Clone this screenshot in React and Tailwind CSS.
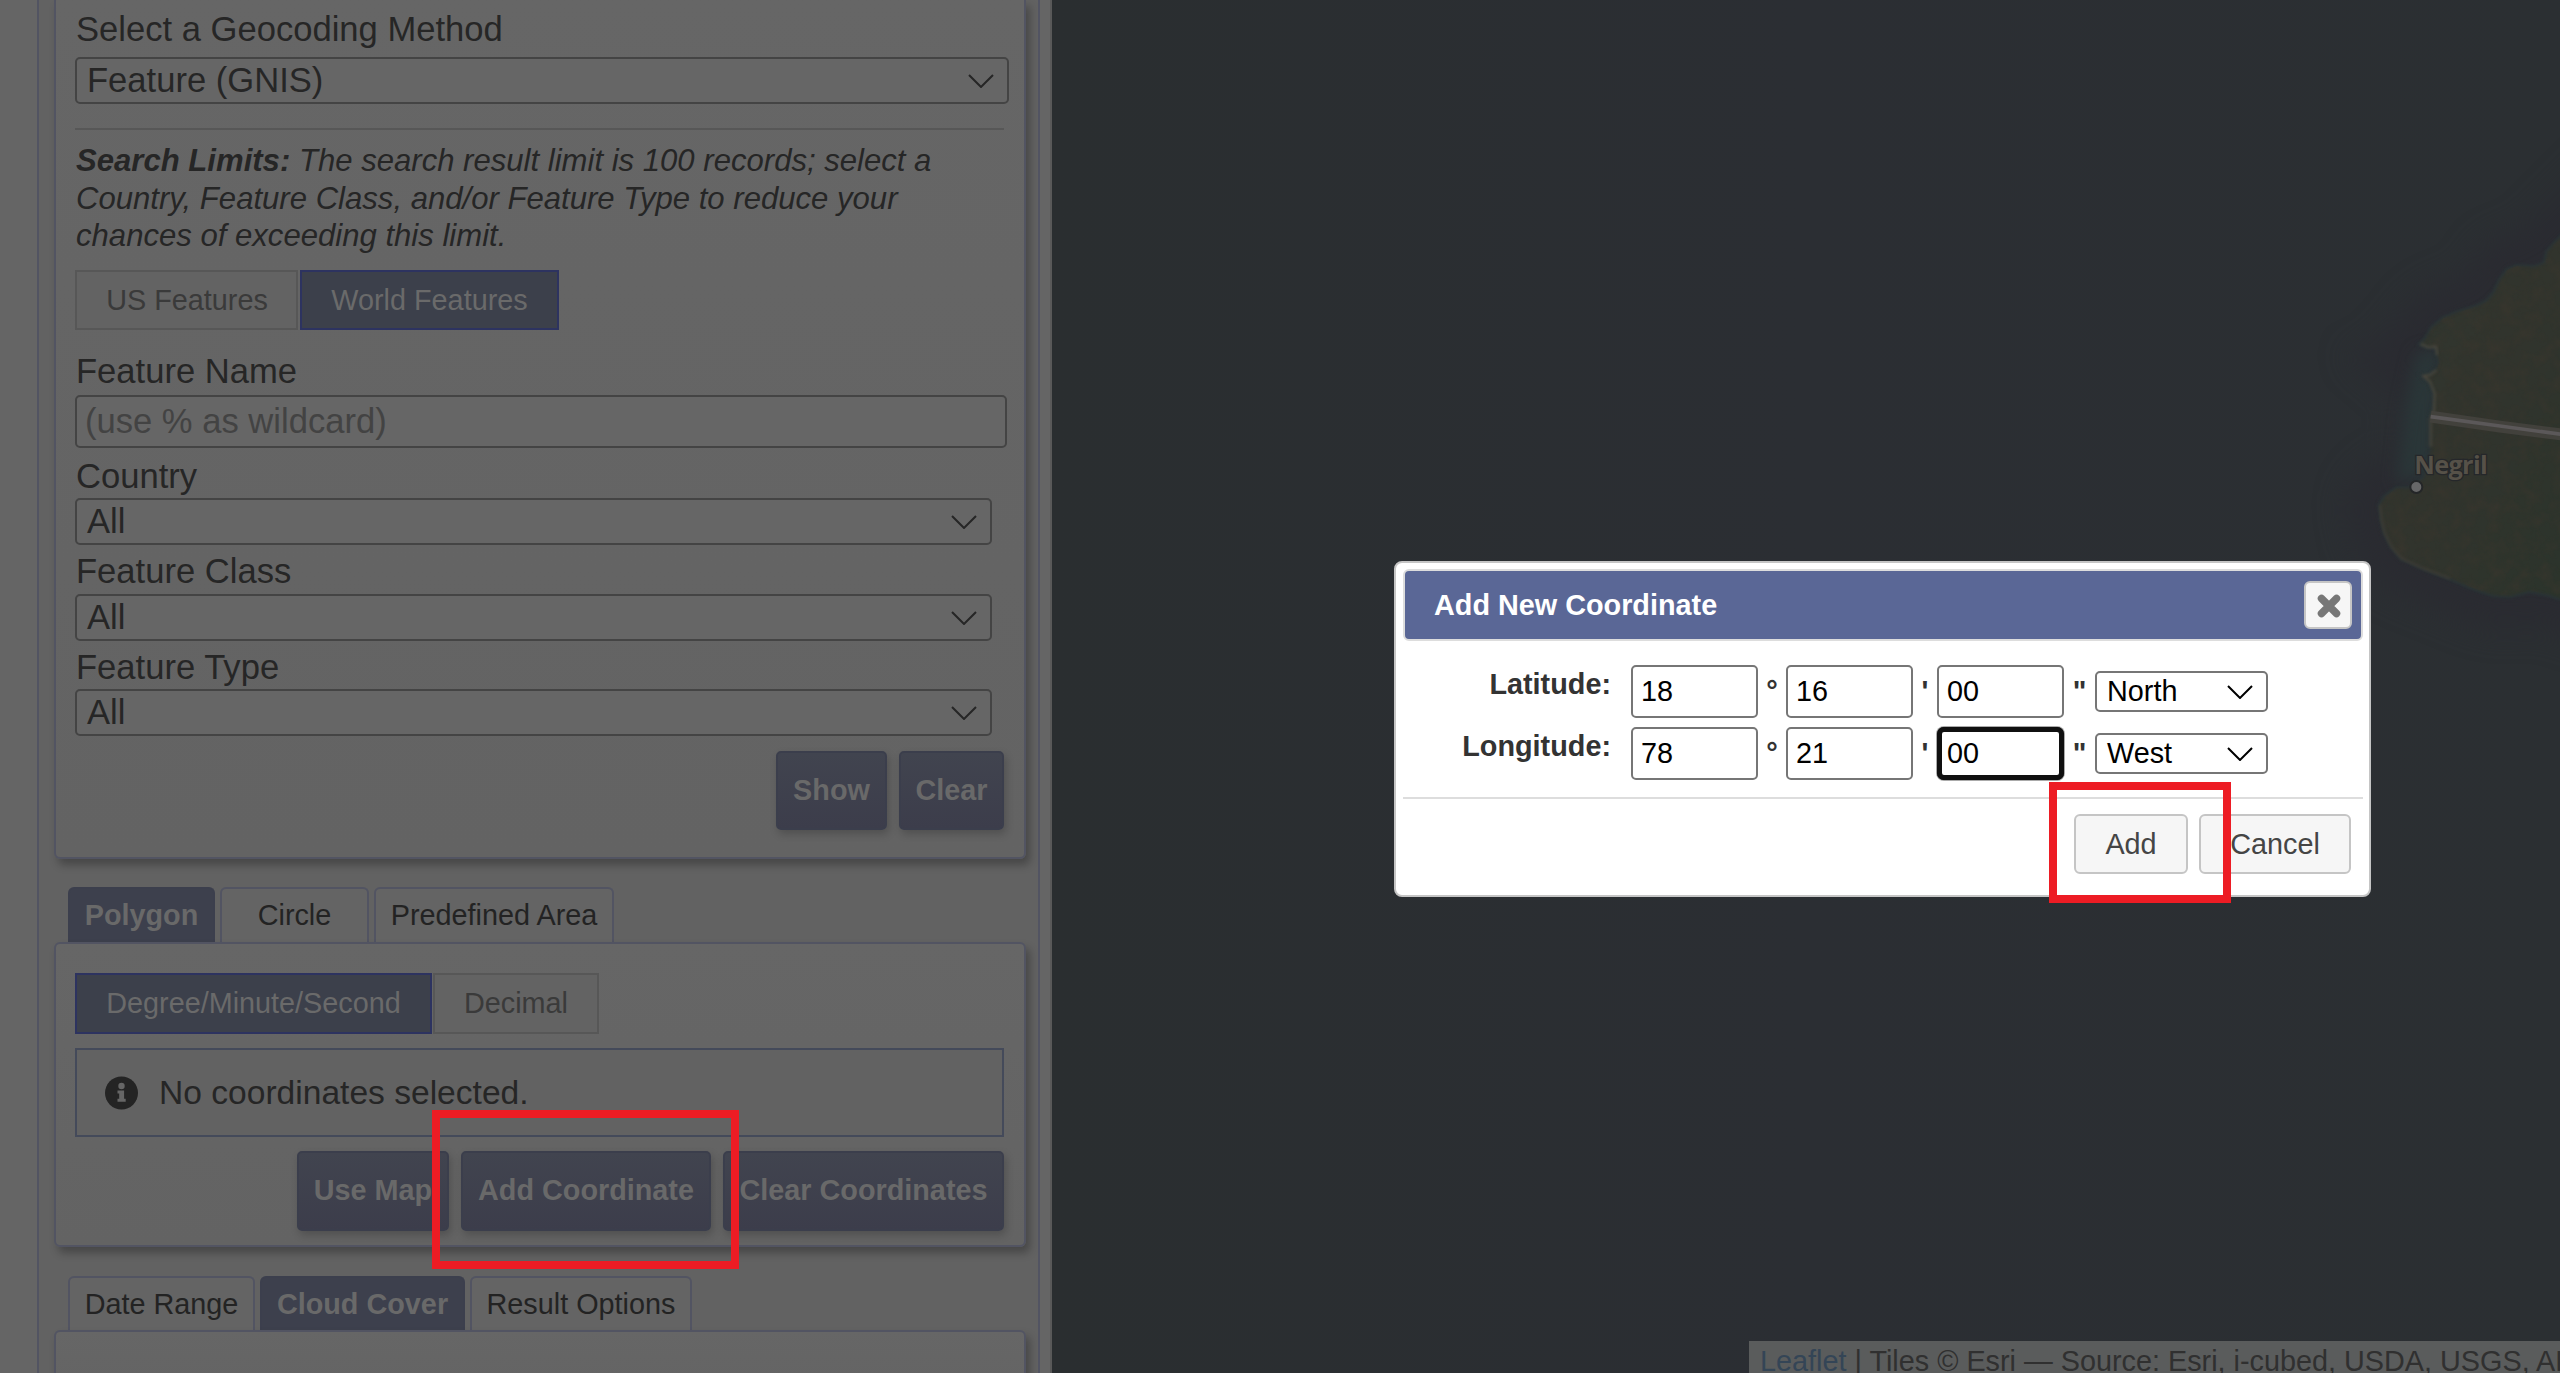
import React from "react";

function Chevron({ className = "" }) {
  return (
    <svg viewBox="0 0 26 14" className={"h-[14px] w-[26px] shrink-0 " + className} fill="none" stroke="currentColor" strokeWidth="2">
      <path d="M1 1 L13 13 L25 1" />
    </svg>
  );
}

function Label({ className = "", children }) {
  return <div className={"h-10 pl-px text-[34.6px] leading-10 whitespace-nowrap text-[#262626] " + className}>{children}</div>;
}

function SideSelect({ className = "", children }) {
  return (
    <div className={"flex h-[47px] items-center justify-between rounded-[5px] border-2 border-[#444] bg-[#666] pr-[13px] pl-[10px] text-[34.6px] leading-none text-[#262626] " + className}>
      <span>{children}</span>
      <Chevron />
    </div>
  );
}

function Toggle({ active, className = "", children }) {
  return (
    <div
      className={
        "flex items-center justify-center border-2 text-[28.8px] leading-none whitespace-nowrap " +
        (active ? "border-[#2d3360] bg-[#3c404b] text-[#6a6a6a] " : "border-[#575757] bg-[#636363] text-[#3a3a3a] ") +
        className
      }
    >
      {children}
    </div>
  );
}

function Tab({ active, className = "", children }) {
  return (
    <div
      className={
        "flex items-center justify-center rounded-t-[6px] border-2 border-b-0 text-[28.8px] leading-none whitespace-nowrap " +
        (active ? "border-[#3c3f4d] bg-[#3d404d] font-bold text-[#696969] " : "border-[#525462] bg-[#646464] text-[#232323] ") +
        className
      }
    >
      {children}
    </div>
  );
}

function ActionButton({ className = "", children }) {
  return (
    <div
      className={
        "flex items-center justify-center rounded-[5px] border-2 border-[#3b3e4c] bg-linear-to-b from-[#41444f] to-[#3c3d4b] text-[28.8px] leading-none font-bold whitespace-nowrap text-[#696969] shadow-[2px_4px_8px_rgba(0,0,0,0.2)] " +
        className
      }
    >
      {children}
    </div>
  );
}

function Panel({ className = "", children }) {
  return (
    <div className={"flex shrink-0 flex-col border-2 border-[#525462] bg-linear-to-b from-[#666] to-[#636363] pl-[19px] shadow-[4px_6px_9px_rgba(0,0,0,0.28)] " + className}>
      {children}
    </div>
  );
}

function Sidebar() {
  return (
    <div className="flex h-full w-[1052px] shrink-0 border-r-2 border-[#595959] bg-[#656565] pl-[37px]">
      <div className="flex h-full w-[1003px] flex-col overflow-hidden border-x-2 border-[#525462] bg-[#626262] pl-[15px]">
        <Panel className="h-[859px] w-[972px] rounded-b-[6px] border-t-0">
          <Label className="mt-[9px]">Select a Geocoding Method</Label>
          <SideSelect className="mt-2 w-[934px]">Feature (GNIS)</SideSelect>
          <div className="mt-6 h-0.5 w-[929px] bg-[#575757]" />
          <p className="mt-3 h-[112px] pl-px text-[31.1px] leading-[37.6px] whitespace-nowrap text-[#262626] italic">
            <b>Search Limits:</b> The search result limit is 100 records; select a<br />
            Country, Feature Class, and/or Feature Type to reduce your<br />
            chances of exceeding this limit.
          </p>
          <div className="mt-4 flex gap-0.5">
            <Toggle className="h-[60px] w-[223px] pl-px">US Features</Toggle>
            <Toggle active className="h-[60px] w-[259px]">World Features</Toggle>
          </div>
          <Label className="mt-[21px]">Feature Name</Label>
          <div className="mt-1 flex h-[53px] w-[932px] items-center rounded-[5px] border-2 border-[#444] bg-[#666] pl-2 text-[34.6px] leading-none text-[#434343]">
            (use % as wildcard)
          </div>
          <Label className="mt-2">Country</Label>
          <SideSelect className="mt-0.5 w-[917px]">All</SideSelect>
          <Label className="mt-1.5">Feature Class</Label>
          <SideSelect className="mt-[3px] w-[917px]">All</SideSelect>
          <Label className="mt-1.5">Feature Type</Label>
          <SideSelect className="mt-0.5 w-[917px]">All</SideSelect>
          <div className="mt-[15px] flex w-[929px] justify-end gap-3">
            <ActionButton className="h-[79px] w-[111px]">Show</ActionButton>
            <ActionButton className="h-[79px] w-[105px]">Clear</ActionButton>
          </div>
        </Panel>

        <div className="mt-7 flex shrink-0 gap-[5px] pl-3.5">
          <Tab active className="h-[55px] w-[147px]">Polygon</Tab>
          <Tab className="h-[55px] w-[149px]">Circle</Tab>
          <Tab className="h-[55px] w-[240px]">Predefined Area</Tab>
        </div>
        <Panel className="h-[305px] w-[972px] rounded-[6px]">
          <div className="mt-[29px] flex gap-px">
            <Toggle active className="h-[61px] w-[357px]">Degree/Minute/Second</Toggle>
            <Toggle className="h-[61px] w-[166px]">Decimal</Toggle>
          </div>
          <div className="mt-3.5 flex h-[89px] w-[929px] items-center gap-5 border-2 border-[#444a5a] bg-[#626262] pl-7 text-[33.6px] leading-none text-[#262626]">
            <svg viewBox="0 0 34 34" className="h-[34px] w-[34px]">
              <circle cx="16.5" cy="17" r="16.5" fill="#242424" />
              <circle cx="16.5" cy="10" r="3.2" fill="#666" />
              <path d="M12.5 14.5h6.6v8.3h1.6v3h-8.2v-3h1.7v-5.3h-1.7z" fill="#666" />
            </svg>
            No coordinates selected.
          </div>
          <div className="mt-3.5 flex w-[929px] justify-end gap-3">
            <ActionButton className="h-20 w-[152px] pb-0.5">Use Map</ActionButton>
            <ActionButton className="h-20 w-[250px] pb-0.5">Add Coordinate</ActionButton>
            <ActionButton className="h-20 w-[281px] pb-0.5">Clear Coordinates</ActionButton>
          </div>
        </Panel>

        <div className="mt-[29px] flex shrink-0 gap-[5px] pl-3.5">
          <Tab className="h-[54px] w-[187px]">Date Range</Tab>
          <Tab active className="h-[54px] w-[205px]">Cloud Cover</Tab>
          <Tab className="h-[54px] w-[222px]">Result Options</Tab>
        </div>
        <Panel className="h-[80px] w-[972px] rounded-t-[6px]" />
      </div>
    </div>
  );
}

const LAND =
  "M790 165 L765 190 L742 215 L735 250 L700 262 L650 258 L622 270 L600 300 L585 335 L560 365 L530 380 L470 398 L430 415 L395 445 L378 475 L362 492 L385 502 L408 500 L412 525 L418 545 L410 570 L390 585 L370 588 L390 605 L404 640 L402 690 L392 715 L392 800 L388 850 L372 895 L330 925 L290 925 L255 950 L240 975 L245 1020 L255 1060 L275 1100 L305 1135 L370 1165 L450 1195 L520 1225 L580 1245 L630 1248 L690 1232 L740 1242 L790 1258 Z";

function Island() {
  return (
    <svg viewBox="0 0 780 1380" className="absolute top-[180px] right-0 h-[460px] w-[260px] overflow-visible">
      <defs>
        <filter id="soft" x="-60%" y="-40%" width="220%" height="180%" colorInterpolationFilters="sRGB"><feGaussianBlur stdDeviation="45" /></filter>
        <filter id="shoal" x="-60%" y="-30%" width="220%" height="160%" colorInterpolationFilters="sRGB"><feGaussianBlur stdDeviation="22" /></filter>
        <filter id="edge" colorInterpolationFilters="sRGB"><feGaussianBlur stdDeviation="4" /></filter>
        <filter id="grain" x="0" y="0" width="100%" height="100%" colorInterpolationFilters="sRGB">
          <feTurbulence type="fractalNoise" baseFrequency="0.025" numOctaves="5" seed="8" />
          <feColorMatrix values="0 0 0 0 0.235  0 0 0 0 0.215  0 0 0 0 0.18  1.8 0 0 0 -0.7" />
        </filter>
        <clipPath id="land"><path d={LAND} /></clipPath>
        <linearGradient id="ground" x1="0" y1="0" x2="1" y2="1">
          <stop offset="0" stopColor="#2f352e" />
          <stop offset="0.5" stopColor="#31342d" />
          <stop offset="1" stopColor="#2b342b" />
        </linearGradient>
      </defs>
      <path d={LAND} fill="#2a2b31" stroke="#2a2b31" strokeWidth="200" filter="url(#soft)" />
      <path d="M350 520 L420 500 L405 880 L290 910 L315 680 Z" fill="#2a3638" filter="url(#shoal)" />
      <path d={LAND} fill="none" stroke="#2a3437" strokeWidth="14" filter="url(#edge)" />
      <path d={LAND} fill="url(#ground)" filter="url(#edge)" />
      <g clipPath="url(#land)">
        <rect width="780" height="1380" filter="url(#grain)" opacity="0.6" />
      </g>
      <path d="M362 492 L385 502 L408 500 L412 525 M410 570 L390 585 L370 588 L390 605 L404 640 L402 690 L392 715 L392 800" fill="none" stroke="#4c493f" strokeWidth="6" filter="url(#edge)" />
      <path d="M240 975 L245 1020 L255 1060 L275 1100 L305 1135 L370 1165 L450 1195" fill="none" stroke="#403d35" strokeWidth="6" filter="url(#edge)" />
      <path d="M392 710 L600 740 L790 764" fill="none" stroke="#42413c" strokeWidth="36" />
      <path d="M392 710 L600 738 L790 764" fill="none" stroke="#5b5859" strokeWidth="11" />
      <circle cx="349" cy="921" r="18" fill="#676768" stroke="#242628" strokeWidth="6" />
      <text x="343" y="881" fontFamily="Open Sans, sans-serif" fontWeight="700" fontSize="76" textLength="220" fill="#565148" stroke="#25272a" strokeWidth="8" paintOrder="stroke">Negril</text>
    </svg>
  );
}

function Map() {
  return (
    <div className="relative h-full grow overflow-hidden bg-linear-to-r from-[#2a2e30] via-[#2b2e33] to-[#2b2f32]">
      <Island />
      <div className="absolute right-0 bottom-0 h-8 w-[811px] overflow-hidden bg-[#5a5c5c] pt-[3px] pl-[11px] text-[28.8px] leading-[34px] whitespace-nowrap text-[#303030]">
        <span className="text-[#344556]">Leaflet</span> | Tiles © Esri — Source: Esri, i-cubed, USDA, USGS, AEX
      </div>
    </div>
  );
}

function Field({ focused, children }) {
  return (
    <div
      className={
        "flex h-[53px] w-[127px] items-center border-2 bg-white pl-2 font-normal text-black " +
        (focused ? "rounded-[7px] border-[#101010] outline-5 -outline-offset-5 outline-[#101010] shadow-[0_0_0_1px_#aaa]" : "rounded-[5px] border-[#767676]")
      }
    >
      {children}
    </div>
  );
}

function CoordinateRow({ label, deg, min, sec, dir, focused }) {
  return (
    <div className="flex h-[53px] items-center text-[28.8px] leading-none font-bold text-[#333]">
      <span className="-mt-[15px] w-[208px] text-right">{label}</span>
      <span className="w-5" />
      <Field>{deg}</Field>
      <span className="w-7 text-center">°</span>
      <Field>{min}</Field>
      <span className="w-6 text-center">'</span>
      <Field focused={focused}>{sec}</Field>
      <span className="w-[31px] pb-px text-center">"</span>
      <div className="flex h-[41px] w-[173px] items-center justify-between rounded-[5px] border-2 border-[#767676] bg-white pr-[13px] pl-[10px] font-normal text-black">
        {dir}
        <Chevron />
      </div>
    </div>
  );
}

function DialogButton({ className = "", children }) {
  return (
    <div className={"flex h-[60px] items-center justify-center rounded-[6px] border-2 border-[#c5c5c5] bg-[#f6f6f6] text-[28.8px] leading-none text-[#454545] " + className}>
      {children}
    </div>
  );
}

function CoordinateDialog() {
  return (
    <div className="absolute top-[561px] left-[1394px] flex h-[336px] w-[977px] flex-col rounded-[8px] border-2 border-[#c5c5c5] bg-white pt-1.5 pr-1.5 pl-[7px]">
      <div className="flex h-[72px] items-center justify-between rounded-[6px] border-2 border-[#ddd] bg-[#5a6796] pr-[9px] pl-[29px]">
        <span className="text-[28.8px] leading-none font-bold text-white">Add New Coordinate</span>
        <div className="flex h-12 w-12 items-center justify-center rounded-[6px] border-2 border-[#c5c5c5] bg-[#f6f6f6] pt-px pl-px">
          <svg viewBox="0 0 24 24" className="h-6 w-6 text-[#777]" fill="none" stroke="currentColor" strokeWidth="7.5" strokeLinecap="round">
            <path d="M4.5 4.5 L19.5 19.5 M19.5 4.5 L4.5 19.5" />
          </svg>
        </div>
      </div>
      <div className="mt-6 flex flex-col gap-[9px]">
        <CoordinateRow label="Latitude:" deg="18" min="16" sec="00" dir="North" />
        <CoordinateRow label="Longitude:" deg="78" min="21" sec="00" dir="West" focused />
      </div>
      <div className="mt-[17px] flex justify-end gap-[11px] border-t-2 border-[#ddd] pt-[15px] pr-3">
        <DialogButton className="w-[114px]">Add</DialogButton>
        <DialogButton className="w-[152px]">Cancel</DialogButton>
      </div>
    </div>
  );
}

export default function App() {
  return (
    <div className="relative flex h-[1373px] w-[2560px] overflow-hidden font-['Liberation_Sans',Arial,sans-serif]">
      <Sidebar />
      <Map />
      <CoordinateDialog />
      <div className="absolute top-[1110px] left-[432px] h-[159px] w-[307px] border-8 border-[#ed1c24]" />
      <div className="absolute top-[782px] left-[2049px] h-[121px] w-[182px] border-8 border-[#ed1c24]" />
    </div>
  );
}
